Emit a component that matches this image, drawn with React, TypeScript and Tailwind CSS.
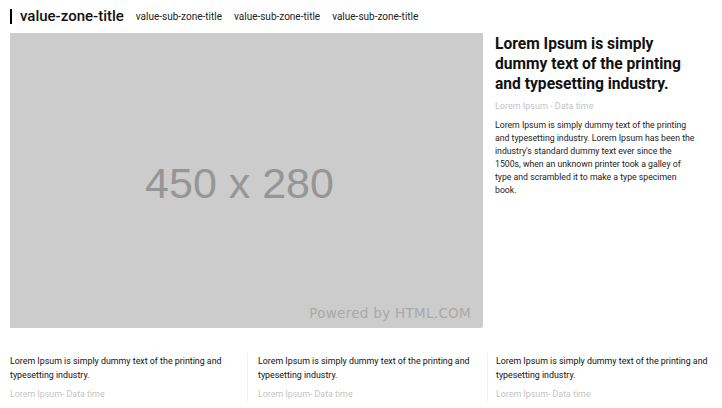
const newsItems = [1, 2, 3];

function ZoneHeader() {
  return (
    <div className="flex items-center h-[33px] pl-[10px]">
      <span className="w-[2px] h-[15px] bg-black" />
      <h2 className="ml-[8px] text-[15px] font-medium text-[#111]">value-zone-title</h2>
      <nav className="flex gap-[12px] ml-[12px] mt-[-1px] text-[10px] text-[#222]">
        <a>value-sub-zone-title</a>
        <a>value-sub-zone-title</a>
        <a>value-sub-zone-title</a>
      </nav>
    </div>
  );
}

function Placeholder() {
  return (
    <div className="relative w-[473px] h-[295px] bg-[#cccccc] flex items-center justify-center rounded-br-[2px]">
      <span className="text-[43px] text-[#969696] mt-[6px] mr-[14px]" style={{ fontFamily: '"Liberation Sans", Arial, sans-serif' }}>
        450 x 280
      </span>
      <span
        className="absolute right-[12px] bottom-[5px] text-[13.5px] text-[#a9a9a9] tracking-[0.3px]"
        style={{ fontFamily: '"DejaVu Sans", sans-serif' }}
      >
        Powered by HTML.COM
      </span>
    </div>
  );
}

export default function App() {
  return (
    <div className="w-[722px] h-[408px] bg-white overflow-hidden" style={{ fontFamily: 'Roboto, "Liberation Sans", sans-serif' }}>
      <ZoneHeader />
      <div className="flex pl-[10px]">
        <Placeholder />
        <div className="ml-[12px] w-[210px]">
          <h1 className="text-[15.6px] leading-[20px] font-bold text-[#111] mt-[1px]">
            Lorem Ipsum is simply dummy text of the printing and typesetting industry.
          </h1>
          <p className="mt-[6px] text-[9px] text-[#c4c4c4]">Lorem Ipsum - Data time</p>
          <p className="mt-[5px] text-[8.7px] leading-[13px] text-[#222] w-[203px]">
            Lorem Ipsum is simply dummy text of the printing and typesetting industry. Lorem Ipsum has been the industry's
            standard dummy text ever since the 1500s, when an unknown printer took a galley of type and scrambled it to make a
            type specimen book.
          </p>
        </div>
      </div>
      <div className="flex pl-[10px] mt-[25px]">
        {newsItems.map((n, i) => (
          <div
            key={n}
            className={
              i === 0
                ? 'w-[237px] pr-[8px]'
                : i === 1
                  ? 'w-[240px] border-l border-[#f0f0f0] pl-[10px] pr-[8px]'
                  : 'w-[235px] border-l border-[#f0f0f0] pl-[8px]'
            }
          >
            <p className="text-[8.85px] leading-[13.5px] text-[#111] mt-[2px]">
              Lorem Ipsum is simply dummy text of the printing and typesetting industry.
            </p>
            <p className="mt-[6px] text-[8.85px] text-[#c4c4c4]">Lorem Ipsum- Data time</p>
          </div>
        ))}
      </div>
    </div>
  );
}
